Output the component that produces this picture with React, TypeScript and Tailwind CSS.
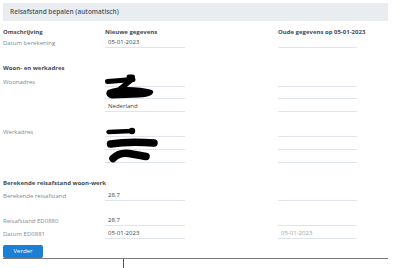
import React from "react";

type RowProps = {
  label?: string;
  value?: string;
  old?: string;
  h: string;
};

const Row = ({ label, value, old, h }: RowProps) => (
  <div className={`grid grid-cols-[102px_80px_93px_79px] ${h}`}>
    <div className="flex items-end leading-[7px] pb-[1px] text-[6px] text-[#7f8992] whitespace-nowrap">{label}</div>
    <div className="flex items-end leading-[7px] pb-[1px] pl-[3px] border-b border-[#dfe5ea] text-[6px] text-[#3a3f45]">
      {value}
    </div>
    <div />
    <div className="flex items-end leading-[7px] pb-[1px] pl-[3px] border-b border-[#dfe5ea] text-[6px] text-[#9ba3aa]">
      {old}
    </div>
  </div>
);

const Section = ({ title, className }: { title: string; className: string }) => (
  <div className={`flex items-center text-[6px] font-bold text-[#3f4b58] ${className}`}>{title}</div>
);

export default function App() {
  return (
    <div
      className="w-[400px] h-[268px] overflow-hidden bg-white pt-[3px]"
      style={{ fontFamily: '"Open Sans", "Noto Sans", sans-serif' }}
    >
      <div className="ml-[3px] w-[385px]">
        {/* panel header */}
        <div className="h-[18px] bg-[#e9edf0] flex items-center pl-[7px] text-[6.5px] font-semibold text-[#4b5866]">
          Reisafstand bepalen (automatisch)
        </div>

        {/* column headings */}
        <div className="mt-[6px] h-[10px] grid grid-cols-[102px_80px_93px_79px] items-center text-[6px] font-bold text-[#3f4b58] whitespace-nowrap">
          <div>Omschrijving</div>
          <div>Nieuwe gegevens</div>
          <div />
          <div>Oude gegevens op 05-01-2023</div>
        </div>
        <Row label="Datum berekening" value="05-01-2023" h="h-[11px]" />

        {/* adressen */}
        <Section title="Woon- en werkadres" className="mt-[15px] h-[11px]" />
        <div className="relative">
          <Row label="Woonadres" h="h-[13px]" />
          <Row h="h-[12px]" />
          <Row value="Nederland" h="h-[13px]" />
          <svg className="absolute left-[100px] top-0 w-[60px] h-[26px]" viewBox="0 0 60 26">
            <path d="M4.5 7.5 L30 5.5" stroke="#000" strokeWidth="5" strokeLinecap="round" fill="none" />
            <path d="M26 3 L29.5 3" stroke="#000" strokeWidth="5" strokeLinecap="round" />
            <path d="M28 6 L16 16" stroke="#000" strokeWidth="5.5" strokeLinecap="round" />
            <path d="M5 16 C15 11.5 36 12.5 49 16 C53 19 47 23.5 36 23.5 L9 24.5 C3 23.5 2 18.5 5 16 Z" fill="#000" />
          </svg>
        </div>

        <div className="relative mt-[12px]">
          <Row label="Werkadres" h="h-[13px]" />
          <Row h="h-[13px]" />
          <Row h="h-[13px]" />
          <svg className="absolute left-[100px] top-0 w-[60px] h-[40px]" viewBox="0 0 60 40">
            <path d="M5.5 8 L29 7" stroke="#000" strokeWidth="4.5" strokeLinecap="round" />
            <circle cx="29" cy="7" r="3.2" fill="#000" />
            <path d="M7.5 20 C20 18 38 18 51 19" stroke="#000" strokeWidth="7.5" strokeLinecap="round" fill="none" />
            <path d="M10 34.5 C14 30.5 20 28.5 26 29.5 C32 30.5 38 31.5 43 32.5" stroke="#000" strokeWidth="7.5" strokeLinecap="round" fill="none" />
          </svg>
        </div>

        {/* reisafstand */}
        <Section title="Berekende reisafstand woon-werk" className="mt-[15px] h-[10px]" />
        <Row label="Berekende reisafstand" value="28.7" h="h-[13px]" />
        <div className="h-[12px]" />
        <Row label="Reisafstand ED0880" value="28.7" h="h-[13px]" />
        <Row label="Datum ED0881" value="05-01-2023" old="05-01-2023" h="h-[13px]" />

        <button className="mt-[6px] h-[13px] w-[40px] rounded-[2px] bg-[#1b7fd5] text-white text-[6px] flex items-center justify-center">
          Verder
        </button>

        {/* table below */}
        <div className="border-t border-[#7a7a7a] grid grid-cols-[121px_1fr] h-[20px]">
          <div className="border-r border-[#555]" />
          <div />
        </div>
      </div>
    </div>
  );
}
